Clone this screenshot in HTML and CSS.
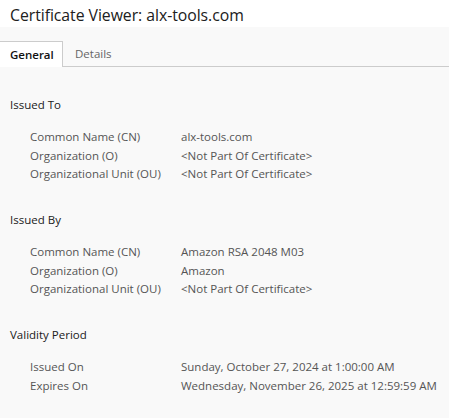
FILE: index.html
```html
<!DOCTYPE html>
<html>
<head>
<meta charset="utf-8">
<link rel="stylesheet" href="styles.css">
</head>
<body>
<div class="header"><h1 class="title">Certificate Viewer: alx-tools.com</h1></div>
<div class="main">
  <div class="tabs">
    <div class="tab active">General</div>
    <div class="tab">Details</div>
  </div>
  <div class="content">
    <section class="section">
      <h2 class="heading">Issued To</h2>
      <div class="grid">
        <div class="label">Common Name (CN)</div><div class="value">alx-tools.com</div>
        <div class="label">Organization (O)</div><div class="value">&lt;Not Part Of Certificate&gt;</div>
        <div class="label">Organizational Unit (OU)</div><div class="value">&lt;Not Part Of Certificate&gt;</div>
      </div>
    </section>
    <section class="section">
      <h2 class="heading">Issued By</h2>
      <div class="grid">
        <div class="label">Common Name (CN)</div><div class="value">Amazon RSA 2048 M03</div>
        <div class="label">Organization (O)</div><div class="value">Amazon</div>
        <div class="label">Organizational Unit (OU)</div><div class="value">&lt;Not Part Of Certificate&gt;</div>
      </div>
    </section>
    <section class="section">
      <h2 class="heading">Validity Period</h2>
      <div class="grid">
        <div class="label">Issued On</div><div class="value">Sunday, October 27, 2024 at 1:00:00 AM</div>
        <div class="label">Expires On</div><div class="value">Wednesday, November 26, 2025 at 12:59:59 AM</div>
      </div>
    </section>
  </div>
</div>
</body>
</html>
```

FILE: styles.css
```css
html, body {
  margin: 0;
  padding: 0;
  height: 100%;
}
body {
  font-family: "Open Sans", "Noto Sans", sans-serif;
  background: #f9f9f9;
  color: #202020;
}
.header {
  background: #ffffff;
  height: 27px;
  padding-left: 10px;
  box-sizing: border-box;
}
.title {
  margin: 0;
  font-size: 15.8px;
  font-weight: 400;
  line-height: 30px;
  height: 27px;
  letter-spacing: -0.05px;
}
.main {
  padding-top: 14px;
}
.tabs {
  display: flex;
  border-bottom: 1px solid #cccccc;
  height: 25px;
}
.tab {
  font-size: 11.5px;
  line-height: 25px;
  padding: 0 12px 0 12px;
  color: #666;
  box-sizing: border-box;
}
.tab.active {
  background: #ffffff;
  color: #111;
  font-weight: 600;
  border: 1px solid #cccccc;
  border-left: none;
  border-bottom: none;
  width: 63px;
  padding-left: 10px;
  margin-bottom: -1px;
  height: 26px;
  line-height: 26px;
}
.content {
  padding: 29px 10px 0 10px;
  font-size: 11.5px;
}
.section {
  margin-bottom: 27.5px;
}
.heading {
  margin: 0 0 14px 0;
  font-size: 11.5px;
  font-weight: 400;
  color: #202020;
  line-height: 18px;
}
.grid {
  display: grid;
  grid-template-columns: 151px 1fr;
  padding-left: 20px;
  line-height: 18.5px;
  color: #555555;
  white-space: nowrap;
}
```
